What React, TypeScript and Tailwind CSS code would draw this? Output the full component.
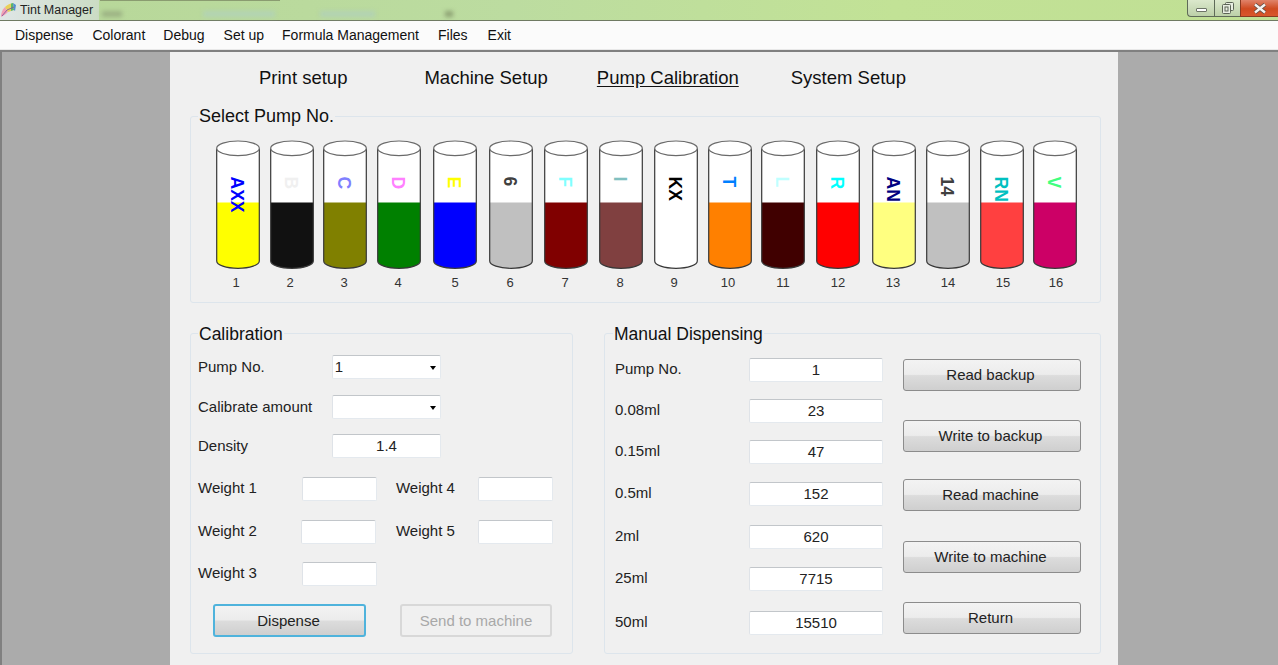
import React from "react";

const tubes = [
  { n: 1, fill: "#ffff00", label: "AXX", color: "#0000ff", gap: "ml-0", shift: "-translate-x-[2px]" },
  { n: 2, fill: "#111111", label: "B", color: "#f0f0f0", gap: "ml-[10px]", shift: "-translate-x-[2px]" },
  { n: 3, fill: "#808000", label: "C", color: "#8080ff", gap: "ml-[9px]", shift: "-translate-x-[1px]" },
  { n: 4, fill: "#008000", label: "D", color: "#ff80ff", gap: "ml-[10px]", shift: "-translate-x-[1px]" },
  { n: 5, fill: "#0000ff", label: "E", color: "#ffff00", gap: "ml-[12px]", shift: "translate-x-0" },
  { n: 6, fill: "#c0c0c0", label: "6", color: "#404040", gap: "ml-[12px]", shift: "-translate-x-[1px]" },
  { n: 7, fill: "#800000", label: "F", color: "#80ffff", gap: "ml-[11px]", shift: "-translate-x-[1px]" },
  { n: 8, fill: "#804040", label: "I", color: "#80c0c0", gap: "ml-[11px]", shift: "-translate-x-[1px]" },
  { n: 9, fill: "#ffffff", label: "KX", color: "#000000", gap: "ml-[11px]", shift: "-translate-x-[2px]" },
  { n: 10, fill: "#ff8000", label: "T", color: "#0080ff", gap: "ml-[10px]", shift: "-translate-x-[2px]" },
  { n: 11, fill: "#400000", label: "L", color: "#c0ffff", gap: "ml-[9px]", shift: "translate-x-0" },
  { n: 12, fill: "#ff0000", label: "R", color: "#00ffff", gap: "ml-[11px]", shift: "translate-x-0" },
  { n: 13, fill: "#ffff80", label: "AN", color: "#000080", gap: "ml-[12px]", shift: "-translate-x-[1px]" },
  { n: 14, fill: "#c0c0c0", label: "14", color: "#404040", gap: "ml-[10px]", shift: "translate-x-0" },
  { n: 15, fill: "#ff4040", label: "RN", color: "#00c0c0", gap: "ml-[10px]", shift: "translate-x-[1px]" },
  { n: 16, fill: "#cc0066", label: "V", color: "#40ff80", gap: "ml-[9px]", shift: "translate-x-[1px]" },
];

function Tube({ fill, label, color, n, gap, shift }: { fill: string; label: string; color: string; n: number; gap: string; shift: string }) {
  return (
    <div className={`flex w-[44px] shrink-0 flex-col items-center ${gap}`}>
      <svg width="44" height="129" viewBox="0 0 44 129" className="block">
        <path d="M0.7 8.5 V121 C0.7 125 10 128.3 22 128.3 C34 128.3 43.3 125 43.3 121 V8.5 Z" fill="#ffffff" />
        <path d="M0.7 62.5 H43.3 V121 C43.3 125 34 128.3 22 128.3 C10 128.3 0.7 125 0.7 121 Z" fill={fill} />
        <path d="M0.7 8.5 V121 C0.7 125 10 128.3 22 128.3 C34 128.3 43.3 125 43.3 121 V8.5" fill="none" stroke="#383838" strokeWidth="1.2" />
        <ellipse cx="22" cy="8.3" rx="21.3" ry="7.3" fill="#ffffff" stroke="#6a6a6a" strokeWidth="1.2" />
        <text
          transform="translate(14.5 36.5) rotate(90)"
          fontFamily="'Liberation Sans', Arial, sans-serif"
          fontWeight="700"
          fontSize="17.5"
          fill={color}
        >
          {label}
        </text>
      </svg>
      <span className={`mt-[6px] ${shift} text-[13px] leading-[15px] text-[#333]`}>{n}</span>
    </div>
  );
}

function Box({ value, w = "w-[134px]", caret = false }: { value?: string; w?: string; caret?: boolean }) {
  return (
    <div
      className={`${w} relative h-[24px] shrink-0 rounded-[2px] border border-t-[#c2c6ca] border-r-[#e4e9ee] border-b-[#e4e9ee] border-l-[#dfe3e8] bg-white text-[15px] leading-[22px] text-[#222] ${caret ? "pl-[2px] text-left" : "text-center"}`}
    >
      {value ?? ""}
      {caret && (
        <span className="absolute right-[4px] top-[10px] h-0 w-0 border-x-[3px] border-t-[4px] border-x-transparent border-t-black" />
      )}
    </div>
  );
}

function Btn({ children, mt = "mt-0", w = "w-[178px]", h = "h-[32px]", tone = "normal" }: { children: React.ReactNode; mt?: string; w?: string; h?: string; tone?: "normal" | "focus" | "disabled" }) {
  const toneCls =
    tone === "focus"
      ? "border-2 border-[#4fb3dc] bg-[linear-gradient(#f3f3f3_0%,#ececec_48%,#dcdcdc_52%,#cfcfcf_100%)] text-[#222] pr-[2px]"
      : tone === "disabled"
        ? "border-2 border-[#d8d8d8] bg-[#f0f0f0] text-[#a8a8a8]"
        : "border border-[#8c8c8c] bg-[linear-gradient(#f3f3f3_0%,#ececec_48%,#dcdcdc_52%,#cfcfcf_100%)] text-[#222] pr-[3px]";
  return (
    <div className={`${mt} ${w} ${h} flex shrink-0 items-center justify-center rounded-[3px] pt-[1px] text-[15px] ${toneCls}`}>
      {children}
    </div>
  );
}

function Group({ title, cls, legend, children }: { title: string; cls: string; legend: string; children: React.ReactNode }) {
  return (
    <fieldset className={`${cls} min-w-0 rounded-[3px] border border-[#dde5ec]`}>
      <legend className={`${legend} px-[1px] leading-[20px] text-[#111]`}>{title}</legend>
      {children}
    </fieldset>
  );
}

function Field({ label, mt, children, lift = "-translate-y-[1px]" }: { label: string; mt: string; children: React.ReactNode; lift?: string }) {
  return (
    <div className={`${mt} flex w-full items-center`}>
      <span className={`${lift} text-[15px] text-[#222]`}>{label}</span>
      {children}
    </div>
  );
}

function Feather() {
  return (
    <svg width="17" height="16" viewBox="0 0 17 16" className="shrink-0">
      <path d="M1 15 C1 11 2 8 5 5 L8 10 C6 12 3 14 1 15 Z" fill="#f2a0b4" />
      <path d="M5 5 C7 3 9 2 11 1.5 L11 9 L8 10 Z" fill="#e9d05a" />
      <path d="M11 1.5 L13 1 L14 8 L11 9 Z" fill="#5cb46a" />
      <path d="M13 1 L16 3 L15 9 L14 8 Z" fill="#4f8fd0" />
      <path d="M2 14 L7 8 L14 5" fill="none" stroke="#7a4fa0" strokeWidth="0.8" />
    </svg>
  );
}

export default function App() {
  return (
    <div className="flex h-[665px] w-[1278px] flex-col overflow-hidden bg-[#ababab] font-['Liberation_Sans',Arial,sans-serif]">
      {/* Title bar */}
      <div className="relative flex h-[21px] shrink-0 items-start justify-between border-b border-[#6f7a63] bg-[linear-gradient(90deg,#c9dcc0_0%,#b8d89a_8%,#bcdca0_40%,#c2e296_70%,#c0df94_100%)]">
        <div className="flex h-[20px] items-center bg-[linear-gradient(90deg,#dfe6e6,#cbdcc4)] pr-[6px]">
          <Feather />
          <span className="ml-[3px] text-[12.5px] text-[#222]">Tint Manager</span>
        </div>
        <span className="absolute left-[100px] top-0 h-[1px] w-[180px] bg-[#8a9c70] blur-[0.5px]" />
        <span className="absolute left-[102px] top-[11px] h-[6px] w-[20px] bg-[#9cb284] blur-[2px]" />
        <span className="absolute left-[203px] top-[11px] h-[6px] w-[72px] bg-[#b2d3b4] blur-[2px]" />
        <span className="absolute left-[320px] top-[11px] h-[6px] w-[55px] bg-[#b2d2b4] blur-[2px]" />
        <span className="absolute left-[445px] top-[11px] h-[6px] w-[8px] bg-[#8ea274] blur-[2px]" />
        <div className="flex h-[17px] items-stretch">
          <div className="flex w-[27px] items-center justify-center rounded-bl-[4px] border-b border-l border-[#5e6a58] bg-[linear-gradient(#dbe8cc,#bcd0a8)]">
            <span className="mt-[3px] h-[4px] w-[11px] rounded-[1px] border border-[#6c7466] bg-white" />
          </div>
          <div className="flex w-[26px] items-center justify-center border-b border-l border-[#5e6a58] bg-[linear-gradient(#dbe8cc,#bcd0a8)]">
            <svg width="12" height="12" viewBox="0 0 12 12">
              <rect x="3.5" y="0.5" width="8" height="8" rx="1" fill="#e8eee2" stroke="#5c6456" />
              <rect x="0.5" y="2.5" width="8" height="9" rx="1" fill="#e8eee2" stroke="#5c6456" />
              <rect x="3" y="5" width="3" height="4" fill="none" stroke="#5c6456" />
            </svg>
          </div>
          <div className="flex w-[38px] items-center justify-center border-b border-l border-[#8a3a20] bg-[linear-gradient(#e0836a,#cf4a20_55%,#d9572c)]">
            <svg width="14" height="11" viewBox="0 0 14 11">
              <path d="M2 1.5 L12 9.5 M12 1.5 L2 9.5" stroke="#5a4a44" strokeWidth="4" />
              <path d="M2 1.5 L12 9.5 M12 1.5 L2 9.5" stroke="#f5f2f0" strokeWidth="2.4" />
            </svg>
          </div>
        </div>
      </div>

      {/* Menu */}
      <div className="flex h-[29px] shrink-0 items-center border-b border-[#e8e8e8] bg-[#fbfbfb] pl-[15px] text-[14px] text-[#111]">
        <span>Dispense</span>
        <span className="ml-[19px]">Colorant</span>
        <span className="ml-[18px]">Debug</span>
        <span className="ml-[19px]">Set up</span>
        <span className="ml-[18px]">Formula Management</span>
        <span className="ml-[19px]">Files</span>
        <span className="ml-[20px]">Exit</span>
      </div>

      {/* Work area */}
      <div className="flex min-h-0 flex-1 border-t-2 border-l-2 border-t-[#808080] border-l-[#808080]">
        <div className="w-[168px] shrink-0" />
        <main className="w-[948px] shrink-0 bg-[#f0f0f0] pl-[20px] pr-[17px] text-[#111]">
          <div className="flex h-[50px] items-center pl-[69px] pt-[2px] text-[18.5px] leading-[22px]">
            <span>Print setup</span>
            <span className="ml-[77px]">Machine Setup</span>
            <span className="ml-[49px] underline underline-offset-[2px]">Pump Calibration</span>
            <span className="ml-[52px]">System Setup</span>
          </div>

          <Group title="Select Pump No." legend="ml-[7px] text-[18px]" cls="mt-[4px] h-[197px] w-[911px]">
            <div className="ml-[25px] mt-[14px] flex">
              {tubes.map((t) => (
                <Tube key={t.n} {...t} />
              ))}
            </div>
          </Group>

          <div className="mt-[20px] flex">
            {/* Calibration */}
            <Group title="Calibration" legend="ml-[7px] translate-y-[1px] text-[17.5px]" cls="h-[331px] w-[383px]">
              <div className="pl-[7px] pt-[12px]">
                <Field label="Pump No." mt="mt-0" lift="translate-y-0">
                  <div className="ml-[67px]"><Box value="1" w="w-[109px]" caret /></div>
                </Field>
                <Field label="Calibrate amount" mt="mt-[16px]" lift="translate-y-0">
                  <div className="ml-[20px]"><Box w="w-[109px]" caret /></div>
                </Field>
                <Field label="Density" mt="mt-[15px]" lift="translate-y-0">
                  <div className="ml-[84px]"><Box value="1.4" w="w-[109px]" /></div>
                </Field>
                <Field label="Weight 1" mt="mt-[19px]">
                  <div className="ml-[45px]"><Box w="w-[75px]" /></div>
                  <span className="ml-[19px] -translate-y-[1px] text-[15px] text-[#222]">Weight 4</span>
                  <div className="ml-[23px]"><Box w="w-[75px]" /></div>
                </Field>
                <Field label="Weight 2" mt="mt-[19px]">
                  <div className="ml-[44px]"><Box w="w-[75px]" /></div>
                  <span className="ml-[20px] -translate-y-[1px] text-[15px] text-[#222]">Weight 5</span>
                  <div className="ml-[23px]"><Box w="w-[75px]" /></div>
                </Field>
                <Field label="Weight 3" mt="mt-[18px]">
                  <div className="ml-[45px]"><Box w="w-[75px]" /></div>
                </Field>
                <div className="ml-[15px] mt-[18px] flex">
                  <Btn tone="focus" w="w-[153px]" h="h-[33px]">Dispense</Btn>
                  <Btn tone="disabled" w="w-[152px]" h="h-[33px]" mt="ml-[34px]">Send to machine</Btn>
                </div>
              </div>
            </Group>

            {/* Manual Dispensing */}
            <Group title="Manual Dispensing" legend="ml-[8px] translate-y-[1px] text-[17.5px]" cls="ml-[31px] h-[331px] w-[497px]">
              <div className="flex pl-[10px] pt-[15px]">
                <div className="w-[268px]">
                  {[
                    ["Pump No.", "1", "mt-0"],
                    ["0.08ml", "23", "mt-[17px]"],
                    ["0.15ml", "47", "mt-[17px]"],
                    ["0.5ml", "152", "mt-[18px]"],
                    ["2ml", "620", "mt-[19px]"],
                    ["25ml", "7715", "mt-[18px]"],
                    ["50ml", "15510", "mt-[20px]"],
                  ].map(([label, value, mt]) => (
                    <div key={label} className={`${mt} flex items-center justify-between`}>
                      <span className="-translate-y-[1px] text-[15px] text-[#222]">{label}</span>
                      <Box value={value} />
                    </div>
                  ))}
                </div>
                <div className="ml-[20px] flex w-[178px] flex-col pt-[1px]">
                  <Btn>Read backup</Btn>
                  <Btn mt="mt-[29px]">Write to backup</Btn>
                  <Btn mt="mt-[27px]">Read machine</Btn>
                  <Btn mt="mt-[30px]">Write to machine</Btn>
                  <Btn mt="mt-[29px]">Return</Btn>
                </div>
              </div>
            </Group>
          </div>
        </main>
      </div>
    </div>
  );
}
